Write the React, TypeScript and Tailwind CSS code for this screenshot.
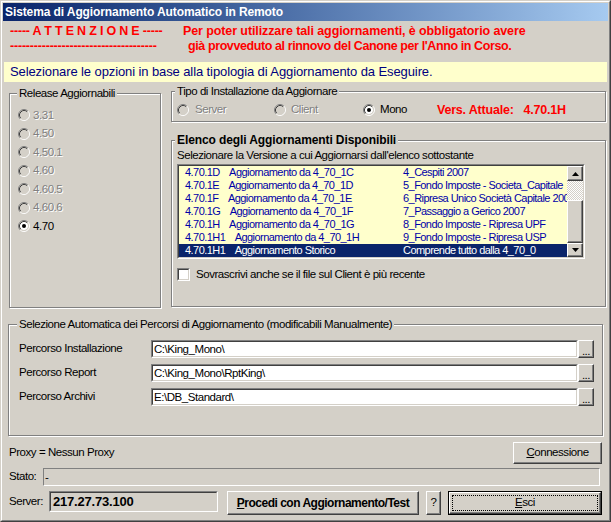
import React from "react";

const Radio = ({ checked = false, disabled = false }: { checked?: boolean; disabled?: boolean }) => (
  <svg width="12" height="12" viewBox="0 0 12 12" className="shrink-0">
    <circle cx="6" cy="6" r="4" fill={disabled ? "#d4d0c8" : "#fff"} />
    <path d="M2.11 9.89A5.5 5.5 0 0 1 9.89 2.11" stroke="#808080" fill="none" />
    <path d="M9.89 2.11A5.5 5.5 0 0 1 2.11 9.89" stroke="#fff" fill="none" />
    <path d="M2.82 9.18A4.5 4.5 0 0 1 9.18 2.82" stroke="#404040" fill="none" />
    <path d="M9.18 2.82A4.5 4.5 0 0 1 2.82 9.18" stroke="#d4d0c8" fill="none" />
    {checked && <circle cx="6" cy="6" r="2" fill="#000" />}
  </svg>
);

const Group = ({
  title,
  className,
  titleClass = "left-[5px]",
  children,
}: {
  title: string;
  className: string;
  titleClass?: string;
  children?: React.ReactNode;
}) => (
  <div
    className={`relative border border-[#808080] shadow-[inset_1px_1px_0_#fff,1px_1px_0_#fff] ${className}`}
  >
    <span
      className={`absolute top-[-8px] bg-[#d4d0c8] px-[2px] leading-[14px] whitespace-nowrap ${titleClass}`}
    >
      {title}
    </span>
    {children}
  </div>
);

const raised =
  "border border-t-white border-l-white border-r-[#404040] border-b-[#404040] shadow-[inset_-1px_-1px_0_#808080] bg-[#d4d0c8]";

const Sunken = ({ className, children }: { className: string; children?: React.ReactNode }) => (
  <div className={`border border-t-[#808080] border-l-[#808080] border-r-white border-b-white ${className}`}>
    <div className="h-full w-full border border-t-[#404040] border-l-[#404040] border-r-[#d4d0c8] border-b-[#d4d0c8]">
      {children}
    </div>
  </div>
);

const releases = [
  { v: "3.31" },
  { v: "4.50" },
  { v: "4.50.1" },
  { v: "4.60" },
  { v: "4.60.5" },
  { v: "4.60.6" },
  { v: "4.70", on: true },
];

const updates = [
  ["4.70.1D", "Aggiornamento da 4_70_1C", "4_Cespiti 2007"],
  ["4.70.1E", "Aggiornamento da 4_70_1D", "5_Fondo Imposte - Societa_Capitale"],
  ["4.70.1F", "Aggiornamento da 4_70_1E", "6_Ripresa Unico Società Capitale 2007"],
  ["4.70.1G", "Aggiornamento da 4_70_1F", "7_Passaggio a Gerico 2007"],
  ["4.70.1H", "Aggiornamento da 4_70_1G", "8_Fondo Imposte - Ripresa UPF"],
  ["4.70.1H1", "Aggiornamento da 4_70_1H", "9_Fondo Imposte - Ripresa USP"],
  ["4.70.1H1", "Aggiornamento Storico", "Comprende tutto dalla 4_70_0"],
];

const paths = [
  ["Percorso Installazione", "C:\\King_Mono\\"],
  ["Percorso Report", "C:\\King_Mono\\RptKing\\"],
  ["Percorso Archivi", "E:\\DB_Standard\\"],
];

const Arrow = ({ up }: { up?: boolean }) => (
  <svg width="7" height="4" viewBox="0 0 7 4">
    <path d={up ? "M3.5 0L7 4H0Z" : "M0 0H7L3.5 4Z"} fill="#000" />
  </svg>
);

const disabledText = "text-[#808080] [text-shadow:1px_1px_0_#fff]";

export default function App() {
  return (
    <div className="w-[611px] h-[522px] bg-[#d4d0c8] text-[11.5px] tracking-[-0.45px] text-black font-['Liberation_Sans',Arial,sans-serif]">
      <div className="h-full border border-t-[#d4d0c8] border-l-[#d4d0c8] border-r-[#404040] border-b-[#404040]">
        <div className="h-full flex flex-col border border-t-white border-l-white border-r-[#808080] border-b-[#808080] p-[1px]">
          {/* title bar */}
          <div className="h-[18px] shrink-0 flex items-center pl-[2px] bg-linear-to-r from-[#0a246a] to-[#a6caf0] text-white font-bold text-[12px] tracking-[-0.1px]">
            Sistema di Aggiornamento Automatico in Remoto
          </div>

          {/* warning */}
          <div className="pt-[3px] pl-[7px] text-[#ff0000] font-bold text-[12.5px]">
            <div className="flex h-[15px] leading-[15px]">
              <span className="w-[173px] whitespace-pre tracking-[-0.2px]">----- A T T E N Z I O N E -----</span>
              <span className="whitespace-nowrap tracking-[-0.1px]">
                Per poter utilizzare tali aggiornamenti, è obbligatorio avere
              </span>
            </div>
            <div className="flex h-[15px] leading-[15px]">
              <span className="w-[178px] whitespace-nowrap tracking-[-0.2px]">-------------------------------------</span>
              <span className="whitespace-nowrap tracking-[-0.4px]">
                già provveduto al rinnovo del Canone per l'Anno in Corso.
              </span>
            </div>
          </div>

          <div className="mt-[8px] mx-[1px] h-[20px] bg-[#ffffcc] pl-[6px] flex items-center text-[#000080] text-[13px] tracking-[-0.1px]">
            Selezionare le opzioni in base alla tipologia di Aggiornamento da Eseguire.
          </div>

          {/* middle */}
          <div className="mt-[4px] flex pl-[6px] items-start">
            <Group
              title="Release Aggiornabili"
              titleClass="left-[7px]"
              className="mt-[7px] w-[152px] h-[215px] pt-[12px] pl-[8px]"
            >
              {releases.map((r) => (
                <div key={r.v} className="h-[18.5px] flex items-center gap-[2px]">
                  <Radio checked={r.on} disabled={!r.on} />
                  <span className={r.on ? "pl-[1px]" : `pl-[1px] ${disabledText}`}>{r.v}</span>
                </div>
              ))}
            </Group>

            <div className="ml-[10px] w-[435px] flex flex-col">
              <Group
                title="Tipo di Installazione da Aggiornare"
                titleClass="left-[3px]"
                className="mt-[5px] h-[31px] pl-[5px] pt-[11px]"
              >
                <div className="flex items-center h-[14px]">
                  <div className="w-[97px] flex items-center gap-[6px]">
                    <Radio disabled />
                    <span className={disabledText}>Server</span>
                  </div>
                  <div className="w-[89px] flex items-center gap-[5px]">
                    <Radio disabled />
                    <span className={disabledText}>Client</span>
                  </div>
                  <div className="w-[74px] flex items-center gap-[5px]">
                    <Radio checked />
                    <span>Mono</span>
                  </div>
                  <span className="text-[#ff0000] font-bold text-[12.5px] tracking-[-0.2px] whitespace-pre">
                    Vers. Attuale:   4.70.1H
                  </span>
                </div>
              </Group>

              <Group
                title="Elenco degli Aggiornamenti Disponibili"
                titleClass="left-[3px] font-bold text-[12px] tracking-[-0.1px]"
                className="mt-[18px] h-[167px] pl-[5px] pt-[7px]"
              >
                <div className="h-[14px] leading-[14px] whitespace-nowrap">
                  Selezionare la Versione a cui Aggiornarsi dall'elenco sottostante
                </div>
                <Sunken className="mt-[2px] w-[408px] h-[95px] bg-[#ffffcc]">
                  <div className="flex h-full">
                    <div className="flex-1 overflow-hidden text-[#0000a8] text-[11px] tracking-[-0.55px]">
                      {updates.map(([v, a, d], i) => (
                        <div
                          key={i}
                          className={`h-[13px] leading-[13px] flex whitespace-nowrap ${
                            i === 6 ? "bg-[#0a246a] text-white" : ""
                          }`}
                        >
                          <span className="w-[224px] pl-[6px] whitespace-pre shrink-0">
                            {v}    {a}
                          </span>
                          <span>{d}</span>
                        </div>
                      ))}
                    </div>
                    <div className="w-[16px] flex flex-col shrink-0">
                      <div className={`h-[15px] flex items-center justify-center ${raised}`}>
                        <Arrow up />
                      </div>
                      <div className="h-[19px] bg-[repeating-conic-gradient(#fff_0%_25%,#d4d0c8_0%_50%)] bg-[length:2px_2px]" />
                      <div className={`h-[43px] ${raised}`} />
                      <div className={`h-[14px] flex items-center justify-center ${raised}`}>
                        <Arrow />
                      </div>
                    </div>
                  </div>
                </Sunken>
                <div className="mt-[7px] flex items-center gap-[6px]">
                  <Sunken className="w-[13px] h-[13px] bg-white" />
                  <span>Sovrascrivi anche se il file sul Client è più recente</span>
                </div>
              </Group>
            </div>
          </div>

          {/* percorsi */}
          <Group
            title="Selezione Automatica dei Percorsi di Aggiornamento (modificabili Manualmente)"
            titleClass="left-[8px]"
            className="mt-[16px] ml-[5px] w-[595px] h-[112px] pt-[15px] pl-[10px]"
          >
            {paths.map(([l, p]) => (
              <div key={l} className="h-[24px] flex items-start">
                <span className="w-[132px] h-[18px] leading-[17px]">{l}</span>
                <Sunken className="w-[427px] h-[18px] bg-white">
                  <div className="pl-[1px] leading-[14px]">{p}</div>
                </Sunken>
                <div className={`w-[16px] h-[18px] flex items-end justify-center leading-[12px] ${raised}`}>...</div>
              </div>
            ))}
          </Group>

          {/* footer */}
          <div className="mt-[6px] pl-[6px] pr-[6px] flex items-center h-[22px]">
            <span className="flex-1">Proxy = Nessun Proxy</span>
            <div className={`w-[89px] h-[22px] flex items-center justify-center ${raised}`}>
              <span>
                <u>C</u>onnessione
              </span>
            </div>
          </div>
          <div className="mt-[4px] pl-[6px] flex items-center h-[18px]">
            <span className="w-[34px]">Stato:</span>
            <div className="w-[557px] h-[18px] border border-t-[#808080] border-l-[#808080] border-r-white border-b-white pl-[1px] leading-[16px]">
              -
            </div>
          </div>
          <div className="mt-[5px] pl-[6px] flex items-start">
            <span className="w-[40px] leading-[20px]">Server:</span>
            <Sunken className="w-[169px] h-[21px]">
              <div className="pl-[2px] leading-[18px] font-bold text-[13px] tracking-[-0.2px]">217.27.73.100</div>
            </Sunken>
            <div
              className={`ml-[9px] w-[192px] h-[24px] flex items-center justify-center font-bold text-[12px] tracking-[-0.5px] whitespace-nowrap ${raised}`}
            >
              <span>
                <u>P</u>rocedi con Aggiornamento/Test
              </span>
            </div>
            <div className={`ml-[7px] w-[15px] h-[24px] flex items-center justify-center ${raised}`}>?</div>
            <div className="ml-[7px] w-[154px] h-[24px] border border-black">
              <div className={`h-full flex items-center justify-center ${raised}`}>
                <div className="w-[146px] h-[16px] border border-dotted border-black flex items-center justify-center">
                  <span>
                    <u>E</u>sci
                  </span>
                </div>
              </div>
            </div>
          </div>
        </div>
      </div>
    </div>
  );
}
